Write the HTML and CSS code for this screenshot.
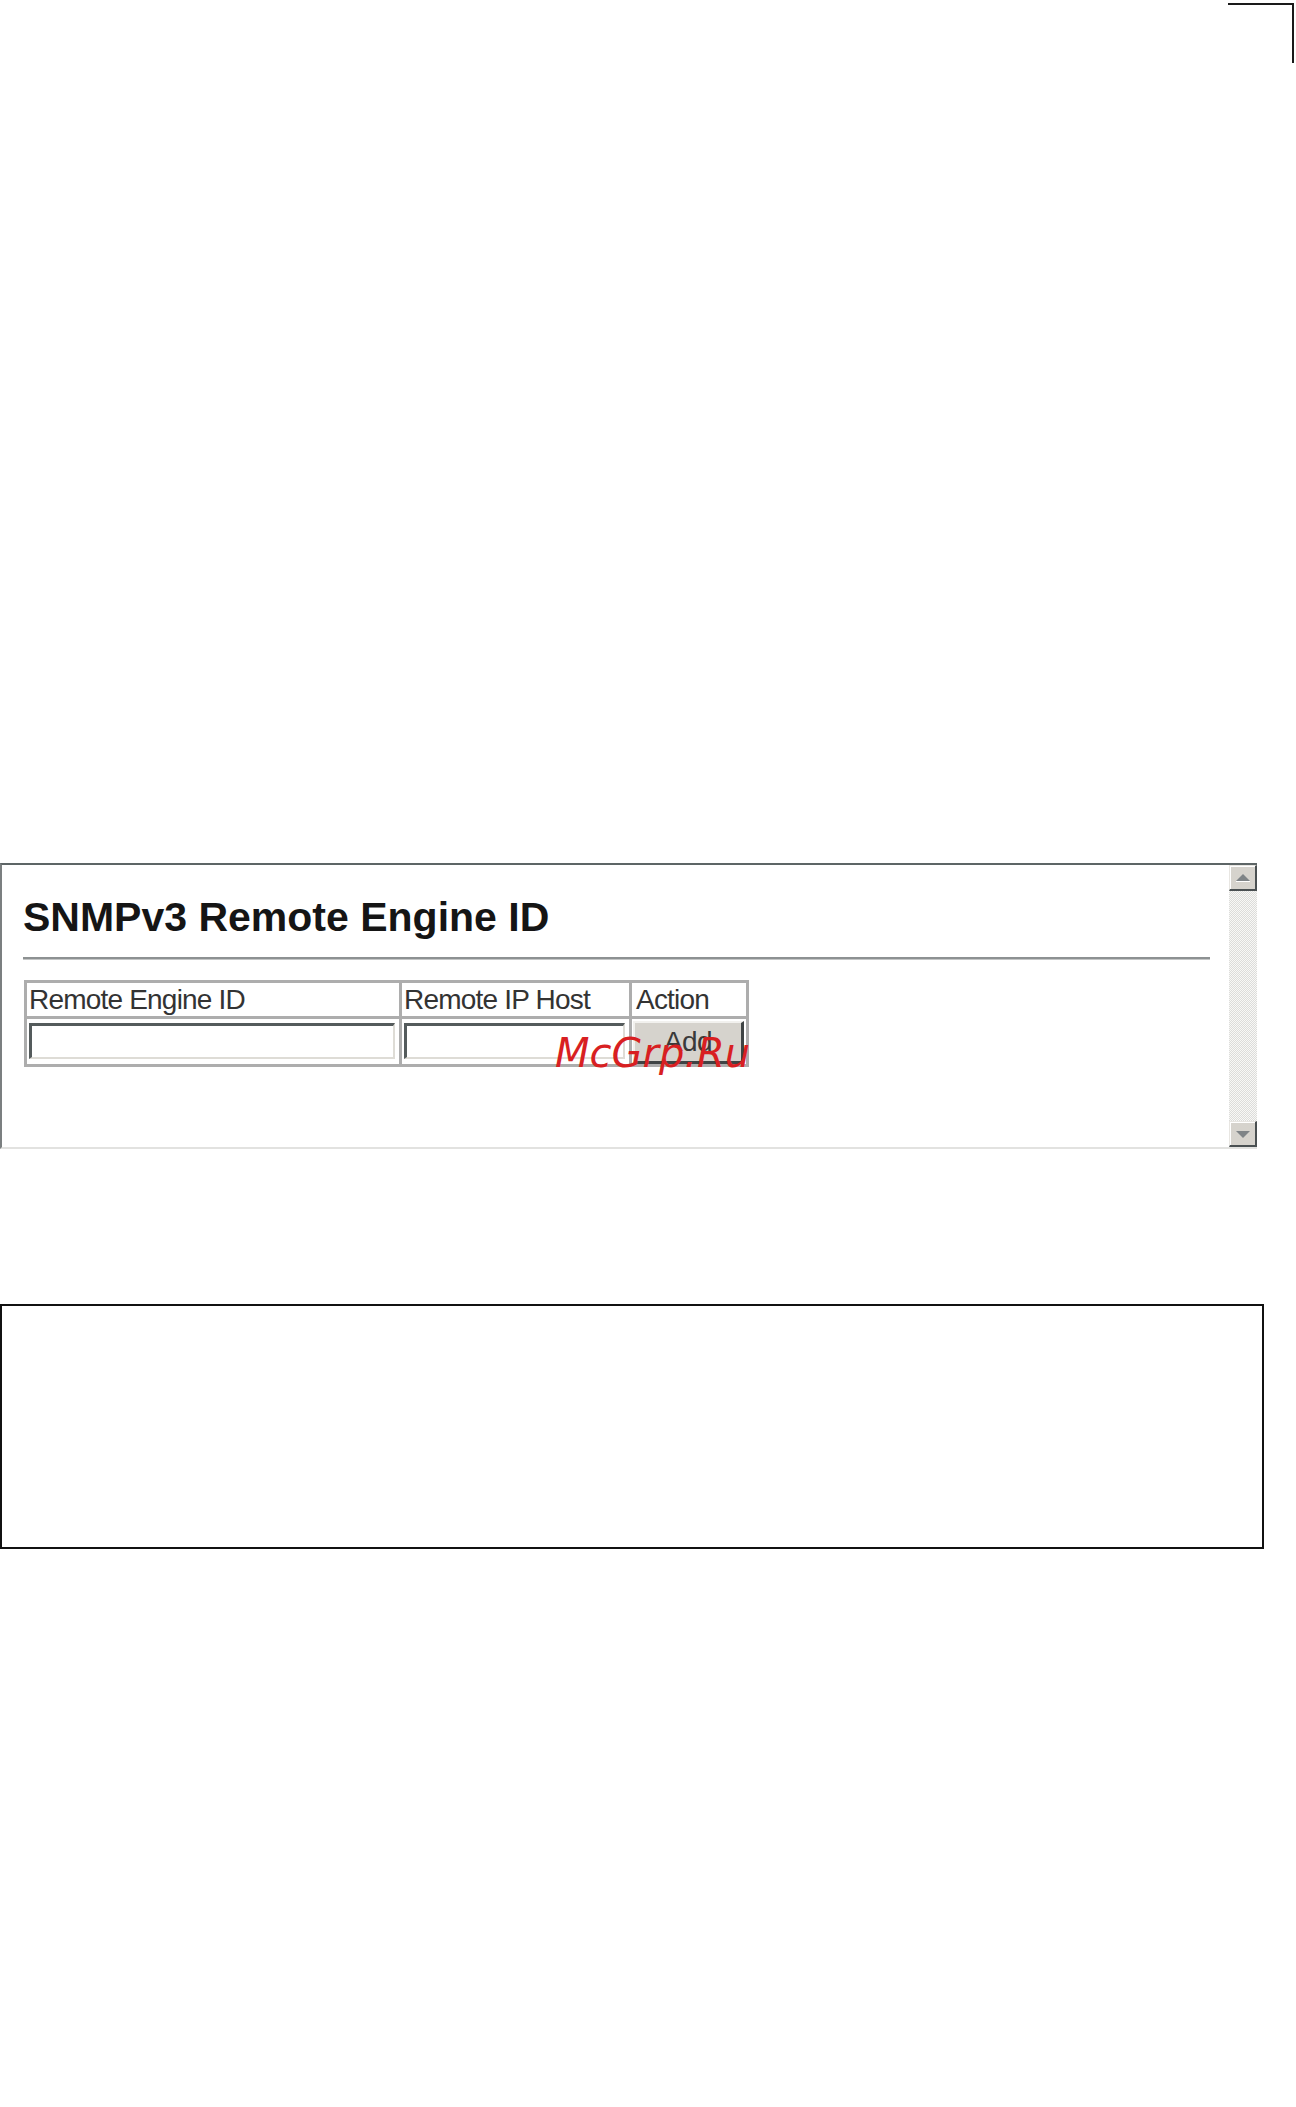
FILE: index.html
```html
<!doctype html>
<html>
<head>
    <title>SNMPv3 Remote Engine ID</title>
    <meta charset="utf-8" />
    <meta name="viewport" content="width=device-width, initial-scale=1" />
    <link rel="stylesheet" href="styles.css">
</head>

<body>
<div id="page">
	<div class="corner"></div>

	<div class="panel">
		<div class="panel-body">
			<h1 class="title">SNMPv3 Remote Engine ID</h1>
			<hr class="rule" />
			<form onsubmit="return false">
				<table class="engine-table">
					<tr class="head-row">
						<td class="col-id">Remote Engine ID</td>
						<td class="col-host">Remote IP Host</td>
						<td class="col-action">Action</td>
					</tr>
					<tr class="input-row">
						<td><input type="text" class="field field-id" name="engine_id" /></td>
						<td><input type="text" class="field field-host" name="ip_host" /></td>
						<td><button class="add-btn">Add</button></td>
					</tr>
				</table>
			</form>
		</div>

		<div class="scrollbar">
			<div class="sb-btn">
				<svg width="16" height="10" viewBox="0 0 16 10"><polygon points="8,1 15,8 1,8" fill="#7f8487"/><rect x="1" y="8" width="14" height="1" fill="#fff"/></svg>
			</div>
			<div class="sb-track"></div>
			<div class="sb-btn">
				<svg width="16" height="10" viewBox="0 0 16 10"><polygon points="1,2 15,2 8,9" fill="#7f8487"/></svg>
			</div>
		</div>

		<span class="stamp">McGrp.Ru</span>
	</div>

	<div class="note-box"></div>
</div>
</body>
</html>
```

FILE: styles.css
```css
html {
	background: #fff;
}
body {
	margin: 0;
	font-family: "Liberation Sans", Arial, sans-serif;
	color: #222;
}
#page {
	width: 1296px;
	height: 2107px;
	display: flex;
	flex-direction: column;
}

/* crop mark in the top right */
.corner {
	align-self: flex-end;
	width: 64px;
	height: 58px;
	margin: 3px 2px 0 0;
	border-top: 2px solid #1a1a1a;
	border-right: 2px solid #1a1a1a;
}

/* the captured browser frame */
.panel {
	position: relative;
	width: 1257px;
	height: 286px;
	margin-top: 800px;
	box-sizing: border-box;
	display: flex;
	border-top: 2px solid #5d6566;
	border-left: 2px solid #7b7f80;
	border-bottom: 2px solid #e2e2e0;
}
.panel-body {
	flex: 1;
	padding: 32px 19px 0 21px;
}
.title {
	margin: 0;
	font-size: 41px;
	line-height: 41px;
	font-weight: bold;
	color: #151515;
}
.rule {
	margin: 19px 0 0 0;
	height: 0;
	border: none;
	border-top: 2px solid #8d9192;
	border-bottom: 1px solid #c4c6c6;
}

.engine-table {
	margin: 20px 0 0 1px;
	border-spacing: 3px;
	background: #adadad;
	font-size: 28px;
	letter-spacing: -0.8px;
	color: #333;
}
.engine-table td {
	background: #fff;
	padding: 0 2px;
	vertical-align: top;
	box-sizing: border-box;
}
.head-row td {
	height: 33px;
	line-height: 33px;
}
.col-id { width: 372px; }
.col-host { width: 227px; }
.col-action { width: 114px; padding-left: 4px !important; }
.input-row td {
	height: 45px;
	padding: 4px 4px 0 2px;
}

.field {
	display: block;
	width: 100%;
	height: 36px;
	margin: 0;
	box-sizing: border-box;
	background: #fff;
	border-style: solid;
	border-width: 3px 2px 2px 3px;
	border-color: #545b5c #dedcd6 #dedcd6 #545b5c;
	outline: none;
}

.input-row td:last-child {
	padding: 2px 0 0 1px;
}
.add-btn {
	display: block;
	width: 111px;
	height: 43px;
	margin: 0;
	box-sizing: border-box;
	background: #d6d3cd;
	border-style: solid;
	border-width: 2px 3px 3px 2px;
	border-color: #f2f1ee #3f4445 #3f4445 #f2f1ee;
	font-family: "Liberation Sans", Arial, sans-serif;
	font-size: 28px;
	letter-spacing: -0.6px;
	color: #3a3a3a;
	padding: 0;
}

.scrollbar {
	width: 28px;
	display: flex;
	flex-direction: column;
}
.sb-btn {
	height: 26px;
	box-sizing: border-box;
	background: #d6d3cd;
	border-style: solid;
	border-width: 1px 2px 2px 1px;
	border-color: #e8e6e2 #4a5052 #4a5052 #e8e6e2;
	box-shadow: inset 1px 1px 0 #fff;
	display: flex;
	align-items: center;
	justify-content: center;
}
.sb-track {
	flex: 1;
	background: repeating-conic-gradient(#dcdcda 0 25%, #f8f8f6 0 50%) 0 0 / 2px 2px;
}

/* site stamp laid over the frame */
.stamp {
	position: absolute;
	left: 553px;
	top: 168px;
	font-family: "DejaVu Sans", sans-serif;
	font-style: italic;
	font-size: 40px;
	line-height: 40px;
	color: #d81f22;
	letter-spacing: 0;
}

.note-box {
	width: 1264px;
	height: 245px;
	margin-top: 155px;
	box-sizing: border-box;
	border: 2px solid #111;
}
```
